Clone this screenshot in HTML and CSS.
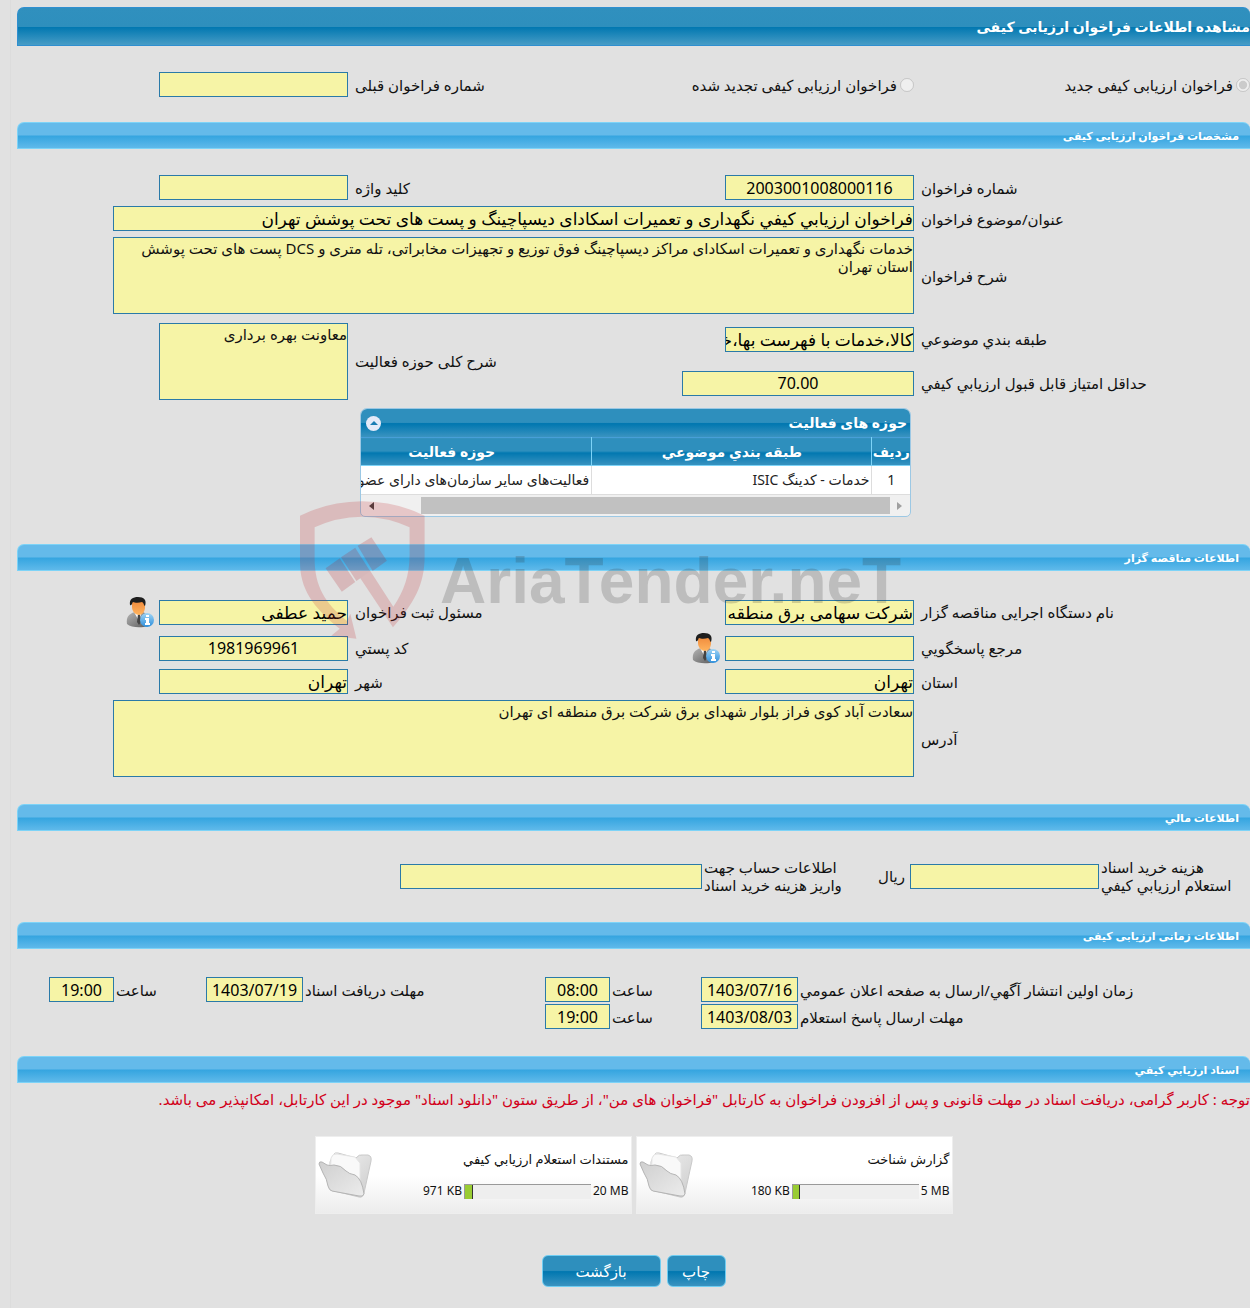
FILE: index.html
```html
<!DOCTYPE html>
<html lang="fa" dir="rtl">

<head>
    <meta charset="UTF-8">
    <meta name="viewport" content="width=device-width, initial-scale=1.0">
    <title>مشاهده اطلاعات فراخوان ارزیابی کیفی</title>
    <link rel="stylesheet" href="styles.css">
</head>

<body>
    <!-- shared drawings -->
    <svg class="defs" aria-hidden="true">
        <defs>
            <linearGradient id="face" x1="0" y1="0" x2="0" y2="1">
                <stop offset="0" stop-color="#f08a3c" />
                <stop offset="1" stop-color="#ffb45e" />
            </linearGradient>
            <linearGradient id="suit" x1="0" y1="0" x2="1" y2="1">
                <stop offset="0" stop-color="#b5b5b5" />
                <stop offset="1" stop-color="#5c5c5c" />
            </linearGradient>
            <linearGradient id="badge" x1="0" y1="0" x2="0" y2="1">
                <stop offset="0" stop-color="#9fd4f5" />
                <stop offset="1" stop-color="#2e8fdc" />
            </linearGradient>
            <linearGradient id="folderBack" x1="0" y1="0" x2="1" y2="1">
                <stop offset="0" stop-color="#f3f3f3" />
                <stop offset="1" stop-color="#cccccc" />
            </linearGradient>
            <linearGradient id="folderFront" x1="0" y1="0" x2="1" y2="1">
                <stop offset="0" stop-color="#cfcfcf" />
                <stop offset="1" stop-color="#ececec" />
            </linearGradient>
            <symbol id="user" viewBox="0 0 28 32">
                <path d="M1 28C0 22 2 18 9 16h8c5 2 6 8 5 14C16 32 5 32 1 28z" fill="url(#suit)" />
                <path d="M8 16l5 9 3-9z" fill="#fff" />
                <path d="M12 18h2l1 8-2 3-2-3z" fill="#444" />
                <path d="M6 7c0-3 13-3 13 0v4c0 5-3 8-6 8s-7-3-7-8z" fill="url(#face)" />
                <path d="M4 9C3 3 7 1 12 1c6 0 9 3 7 9-1 0-1-3-3-4-3 1-7 1-9 0-1 1-1 4-3 3z" fill="#1e1e1e" />
                <circle cx="21" cy="24" r="7" fill="url(#badge)" />
                <path d="M20 19h3v2h-3zM19 22h4v5h1v2h-5v-2h1v-3h-1z" fill="#fff" />
            </symbol>
            <symbol id="folder" viewBox="0 0 54 50">
                <path d="M12 12l3-7q2-3 5-2l18 5q3-4 7-3l5 0q4 1 3 6l-7 32q-1 5-5 4L12 40z" fill="url(#folderBack)" stroke="#c9c9c9" />
                <path d="M13 8q2-5 6-4l18 3 5 6v28L12 30z" fill="#f9f9f9" stroke="#e4e4e4" />
                <path d="M1 14q0-3 3-2l5 3q3 1 7 0 7 0 12 6 3 3 9 4 7 4 9 19-1 3-5 2L14 41q-3-1-4-5-1-7-5-13z" fill="url(#folderFront)" stroke="#b4b4b4" />
            </symbol>
        </defs>
    </svg>

    <main class="page">
        <h1 class="title-bar">مشاهده اطلاعات فراخوان ارزیابی کیفی</h1>

        <div class="form-grid type-row">
            <div class="radio">
                <input type="radio" id="typeNew" name="type" checked disabled>
                <label for="typeNew">فراخوان ارزیابی کیفی جدید</label>
            </div>
            <div class="radio">
                <input type="radio" id="typeRenewed" name="type" disabled>
                <label for="typeRenewed">فراخوان ارزیابی کیفی تجدید شده</label>
            </div>
            <label for="prevNumber">شماره فراخوان قبلی</label>
            <div class="cell"><input class="field" id="prevNumber" type="text" readonly></div>
        </div>

        <section class="section">
            <h2 class="section-bar">مشخصات فراخوان ارزیابی کیفی</h2>
            <div class="form-grid">
                <label for="number">شماره فراخوان</label>
                <div class="cell"><input class="field number" id="number" type="text" value="2003001008000116" readonly></div>
                <label for="keyword">کلید واژه</label>
                <div class="cell"><input class="field" id="keyword" type="text" readonly></div>

                <label for="subject">عنوان/موضوع فراخوان</label>
                <div class="cell full"><input class="field" id="subject" type="text" value="فراخوان ارزيابي كيفي نگهداری و تعمیرات اسکادای دیسپاچینگ و پست های تحت پوشش تهران" readonly></div>

                <label for="description">شرح فراخوان</label>
                <div class="cell full"><textarea class="area" id="description" readonly>خدمات نگهداری و تعمیرات اسکادای مراکز دیسپاچینگ فوق توزیع و تجهیزات مخابراتی، تله متری و DCS پست های تحت پوشش استان تهران</textarea></div>

                <label for="category">طبقه بندي موضوعي</label>
                <div class="cell tall"><input class="field" id="category" type="text" value="کالا،خدمات با فهرست بها،خدمات" readonly></div>
                <label for="scope" class="two-rows">شرح کلی حوزه فعالیت</label>
                <div class="cell two-rows"><textarea class="area narrow" id="scope" readonly>معاونت بهره برداری</textarea></div>

                <label for="score" class="first">حداقل امتياز قابل قبول ارزيابي كيفي</label>
                <div class="cell tall second"><input class="field number wide" id="score" type="text" value="70.00" readonly></div>

                <div class="activity">
                    <div class="activity-title">
                        <span>حوزه های فعالیت</span>
                        <button type="button" class="collapse" aria-label="بستن"></button>
                    </div>
                    <div class="activity-view">
                        <table>
                            <thead>
                                <tr>
                                    <th class="col-row">ردیف</th>
                                    <th class="col-name">طبقه بندي موضوعي</th>
                                    <th class="col-name">حوزه فعالیت</th>
                                </tr>
                            </thead>
                            <tbody>
                                <tr>
                                    <td class="center">1</td>
                                    <td>خدمات - کدینگ ISIC</td>
                                    <td>فعالیت‌های سایر سازمان‌های دارای عضو</td>
                                </tr>
                            </tbody>
                        </table>
                    </div>
                    <div class="scroll">
                        <span class="arrow right"></span>
                        <span class="thumb"></span>
                        <span class="arrow left"></span>
                    </div>
                </div>
            </div>
        </section>

        <section class="section marked">
            <h2 class="section-bar">اطلاعات مناقصه گزار</h2>
            <div class="form-grid">
                <label for="org">نام دستگاه اجرایی مناقصه گزار</label>
                <div class="cell person"><input class="field" id="org" type="text" value="شرکت سهامی برق منطقه" readonly></div>
                <label for="registrar">مسئول ثبت فراخوان</label>
                <div class="cell person">
                    <input class="field" id="registrar" type="text" value="حمید عطفی" readonly>
                    <svg class="user-icon" aria-hidden="true"><use href="#user" /></svg>
                </div>

                <label for="contact">مرجع پاسخگويي</label>
                <div class="cell person">
                    <input class="field" id="contact" type="text" readonly>
                    <svg class="user-icon" aria-hidden="true"><use href="#user" /></svg>
                </div>
                <label for="postcode">كد پستي</label>
                <div class="cell person"><input class="field number" id="postcode" type="text" value="1981969961" readonly></div>

                <label for="province">استان</label>
                <div class="cell"><input class="field" id="province" type="text" value="تهران" readonly></div>
                <label for="city">شهر</label>
                <div class="cell"><input class="field" id="city" type="text" value="تهران" readonly></div>

                <label for="address">آدرس</label>
                <div class="cell full"><textarea class="area" id="address" readonly>سعادت آباد کوی فراز بلوار شهدای برق شرکت برق منطقه ای تهران</textarea></div>
            </div>

            <div class="watermark" dir="ltr">
                <svg viewBox="48 28 308 414" preserveAspectRatio="none" aria-hidden="true">
                    <path fill="#c0282d" d="M48 72Q118 30 201 29 286 30 355 72V195C355 280 328 335 277 407L186 240 203 228 220 236 278 345C304 300 318 250 318 190V107Q265 76 201 75 137 76 84 107V200C84 285 110 335 164 388L172 366 187 441 125 432 146 411C78 345 48 290 48 210z" />
                    <path fill="#b01c24" d="M111 230L146 200 184 271 151 300zM149 197L184 168 221 239 187 268zM190 162L224 137 262 207 227 238z" />
                </svg>
                <span>AriaTender.neT</span>
            </div>
        </section>

        <section class="section">
            <h2 class="section-bar">اطلاعات مالي</h2>
            <div class="form-grid finance">
                <label for="cost">هزینه خرید اسناد<br>استعلام ارزيابي كيفي</label>
                <div class="cell">
                    <input class="field" id="cost" type="text" readonly>
                    <span>ریال</span>
                </div>
                <label for="account">اطلاعات حساب جهت<br>واریز هزینه خرید اسناد</label>
                <div class="cell"><input class="field account" id="account" type="text" readonly></div>
            </div>
        </section>

        <section class="section">
            <h2 class="section-bar">اطلاعات زمانی ارزیابی کیفی</h2>
            <div class="form-grid dates">
                <label for="publishDate">زمان اولين انتشار آگهي/ارسال به صفحه اعلان عمومي</label>
                <div class="cell"><input class="field number date" id="publishDate" type="text" value="1403/07/16" readonly></div>
                <label for="publishTime">ساعت</label>
                <div class="cell"><input class="field number time" id="publishTime" type="text" value="08:00" readonly></div>
                <label for="receiveDate">مهلت دریافت اسناد</label>
                <div class="cell"><input class="field number date" id="receiveDate" type="text" value="1403/07/19" readonly></div>
                <label for="receiveTime">ساعت</label>
                <div class="cell"><input class="field number time" id="receiveTime" type="text" value="19:00" readonly></div>

                <label for="replyDate">مهلت ارسال پاسخ استعلام</label>
                <div class="cell"><input class="field number date" id="replyDate" type="text" value="1403/08/03" readonly></div>
                <label for="replyTime">ساعت</label>
                <div class="cell"><input class="field number time" id="replyTime" type="text" value="19:00" readonly></div>
            </div>
        </section>

        <section class="section">
            <h2 class="section-bar">اسناد ارزيابي كيفي</h2>
            <p class="notice">توجه : کاربر گرامی، دریافت اسناد در مهلت قانونی و پس از افزودن فراخوان به کارتابل "فراخوان های من"، از طریق ستون "دانلود اسناد" موجود در این کارتابل، امکانپذیر می باشد.</p>

            <div class="files">
                <article class="file">
                    <div class="file-info">
                        <label for="fileReport">گزارش شناخت</label>
                        <div class="file-size">
                            <span dir="ltr">5 MB</span>
                            <progress id="fileReport" dir="ltr" value="6" max="100"></progress>
                            <span dir="ltr">180 KB</span>
                        </div>
                    </div>
                    <svg class="folder" aria-hidden="true"><use href="#folder" /></svg>
                </article>
                <article class="file">
                    <div class="file-info">
                        <label for="fileDocs">مستندات استعلام ارزيابي كيفي</label>
                        <div class="file-size">
                            <span dir="ltr">20 MB</span>
                            <progress id="fileDocs" dir="ltr" value="6" max="100"></progress>
                            <span dir="ltr">971 KB</span>
                        </div>
                    </div>
                    <svg class="folder" aria-hidden="true"><use href="#folder" /></svg>
                </article>
            </div>
        </section>

        <div class="actions">
            <button type="button" class="button">چاپ</button>
            <button type="button" class="button back">بازگشت</button>
        </div>
    </main>
</body>

</html>
```
FILE: styles.css
```css
* {
    box-sizing: border-box;
}

body {
    margin: 0;
    background-color: #e1e1e1;
    color: #111;
    font-family: "Noto Sans", "DejaVu Sans", sans-serif;
    font-size: 15px;
    line-height: 18px;
    overflow-x: hidden;
}

input,
textarea,
button {
    font-family: inherit;
    color: inherit;
    margin: 0;
}

.defs {
    position: absolute;
    width: 0;
    height: 0;
}

.page {
    margin-left: 10px;
    padding: 7px 0 21px 6px;
    border-left: 1px solid #dcdcdc;
}

/* bars */
.title-bar {
    height: 39px;
    margin: 0;
    border: 1px solid #2f8fd0;
    border-right: 0;
    border-radius: 7px 7px 0 0;
    background: linear-gradient(#3090be 0%, #2e8fbd 50%, #0077b0 51%, #479cc6 100%);
    color: #fff;
    font-size: 14px;
    line-height: 37px;
}

.section {
    margin-top: 24px;
}

.section-bar {
    height: 27px;
    margin: 0;
    padding-right: 11px;
    border: 1px solid #7dd3f7;
    border-right: 0;
    border-radius: 7px 7px 0 0;
    background: linear-gradient(#64baea 0%, #64baea 48%, #35a5e0 52%, #5fb9ea 100%);
    color: #fff;
    font-size: 11px;
    line-height: 26px;
}

/* form layout */
.form-grid {
    display: grid;
    grid-template-columns: 336fr 261fr 305fr 331fr;
    align-items: center;
    padding-top: 23px;
}

.form-grid > label {
    padding-left: 7px;
    text-align: left;
}

.radio {
    display: flex;
    align-items: center;
    gap: 3px;
    white-space: nowrap;
}

.radio input {
    width: 14px;
    height: 14px;
}

.cell {
    display: flex;
    align-items: center;
    min-height: 31px;
    padding: 3px 0;
    gap: 5px;
}

.type-row {
    padding-top: 25px;
}

.type-row .cell {
    min-height: 27px;
    padding: 1px 0;
}

.full {
    grid-column: 2 / -1;
    padding-left: 96px;
}

.full .field,
.full .area {
    width: 100%;
}

.tall {
    height: 44px;
}

.two-rows {
    grid-row: span 2;
}

.first {
    grid-column: 1;
}

.second {
    grid-column: 2;
}

.person {
    height: 36px;
}

.field {
    width: 189px;
    height: 25px;
    padding: 0;
    border: 1px solid #2a7aa8;
    background-color: #f6f4a6;
    font-size: 17px;
    color: #000;
}

.number {
    font-size: 16px;
    text-align: center;
    direction: ltr;
}

.wide {
    width: 232px;
}

.area {
    display: block;
    height: 77px;
    padding: 1px 0;
    border: 1px solid #2a7aa8;
    background-color: #f6f4a6;
    font-size: 15px;
    line-height: 18px;
    resize: none;
    overflow: hidden;
}

.narrow {
    width: 189px;
}

.user-icon {
    width: 28px;
    height: 32px;
    flex: none;
}

/* activity table */
.activity {
    grid-column: 2 / 4;
    width: 551px;
    margin: 3px 3px 3px 0;
    border: 1px solid #9cc8e4;
    border-radius: 7px 7px 5px 5px;
    overflow: hidden;
    background-color: #f0f0f0;
}

.activity-title {
    display: flex;
    justify-content: space-between;
    align-items: center;
    height: 28px;
    padding: 0 3px 0 5px;
    background: linear-gradient(#2e8fbd 0%, #2e8fbd 48%, #0077b0 52%, #3a93c0 100%);
    color: #fff;
    font-size: 14px;
    font-weight: bold;
}

.collapse {
    display: flex;
    align-items: center;
    justify-content: center;
    width: 15px;
    height: 15px;
    padding: 0;
    border: 0;
    border-radius: 50%;
    background-color: #e4eaf8;
}

.collapse::before {
    content: "";
    border: 4px solid transparent;
    border-top: 0;
    border-bottom: 4px solid #1a7db3;
}

.activity-view {
    overflow: hidden;
}

.activity table {
    width: 599px;
    table-layout: fixed;
    border-collapse: collapse;
    background-color: #fff;
}

.activity th {
    height: 28px;
    padding: 0;
    border-left: 1px solid #7dd3f7;
    border-top: 1px solid #479fd8;
    border-bottom: 1px solid #7dd3f7;
    background: linear-gradient(#2e8fbd 0%, #2e8fbd 48%, #0077b0 52%, #3a93c0 100%);
    color: #fff;
    font-size: 14px;
}

.activity td {
    height: 29px;
    padding: 0 2px;
    border-left: 1px solid #ddd;
    border-bottom: 1px solid #ddd;
    color: #222;
    font-size: 14px;
    white-space: nowrap;
}

.activity td.center {
    text-align: center;
}

.col-row {
    width: 38px;
}

.col-name {
    width: 280px;
}

.scroll {
    display: flex;
    align-items: center;
    height: 21px;
    padding: 0 8px;
}

.thumb {
    flex: 1;
    height: 17px;
    margin: 0 7px 0 47px;
    background-color: #c1c1c1;
}

.arrow {
    border: 4px solid transparent;
}

.arrow.right {
    border-right: 0;
    border-left: 5px solid #a0a0a0;
}

.arrow.left {
    border-left: 0;
    border-right: 5px solid #404040;
}

/* watermark lies over the middle of the form */
.marked {
    position: relative;
}

.watermark {
    position: absolute;
    top: -43px;
    left: 283px;
    display: flex;
    align-items: flex-start;
    gap: 15px;
    opacity: 0.2;
    pointer-events: none;
}

.watermark svg {
    width: 125px;
    height: 138px;
}

.watermark span {
    padding-top: 50px;
    color: #333;
    font-family: "Liberation Sans", sans-serif;
    font-size: 64px;
    font-weight: bold;
    line-height: 60px;
}

/* finance and dates */
.finance {
    grid-template-columns: 151fr 230fr 167fr 685fr;
}

.finance .cell {
    min-height: 44px;
}

.account {
    width: 302px;
}

.finance > label,
.dates > label {
    padding-left: 2px;
    white-space: nowrap;
}

.dates {
    grid-template-columns: 452fr 120fr 68fr 120fr 187fr 120fr 69fr 97fr;
    padding: 27px 0 2px;
}

.dates .cell {
    min-height: 27px;
    padding: 1px 0;
}

.date {
    width: 97px;
}

.time {
    width: 65px;
}

/* documents */
.notice {
    margin: 7px 0 28px;
    color: #d2001a;
}

.files {
    display: flex;
    justify-content: center;
    gap: 4px;
    font-size: 13px;
}

.file {
    display: flex;
    align-items: center;
    justify-content: space-between;
    width: 317px;
    height: 78px;
    padding: 0 2px;
    border: 1px solid #eee;
    background: linear-gradient(#fff 0%, #fff 50%, #ececec 100%);
}

.file-info {
    display: flex;
    flex-direction: column;
    gap: 14px;
}

.file-size {
    display: flex;
    align-items: center;
    gap: 2px;
    font-size: 12px;
}

.folder {
    width: 54px;
    height: 50px;
}

progress {
    width: 127px;
    height: 15px;
    appearance: none;
    -webkit-appearance: none;
    border: 0;
    border-top: 1px solid #999;
    border-left: 1px solid #999;
    background-color: #eee;
}

progress::-webkit-progress-bar {
    background-color: #eee;
}

progress::-webkit-progress-value {
    background-color: #9c3;
    border-right: 1px solid #333;
}

/* buttons */
.actions {
    display: flex;
    justify-content: center;
    gap: 6px;
    margin-top: 41px;
}

.button {
    min-width: 59px;
    height: 32px;
    border: 1px solid #6fcdf2;
    border-radius: 6px;
    background: linear-gradient(#2e8fbd 0%, #2e8fbd 48%, #0077b0 52%, #3a93c0 100%);
    color: #fff;
    font-size: 15px;
}

.back {
    min-width: 119px;
}
```
